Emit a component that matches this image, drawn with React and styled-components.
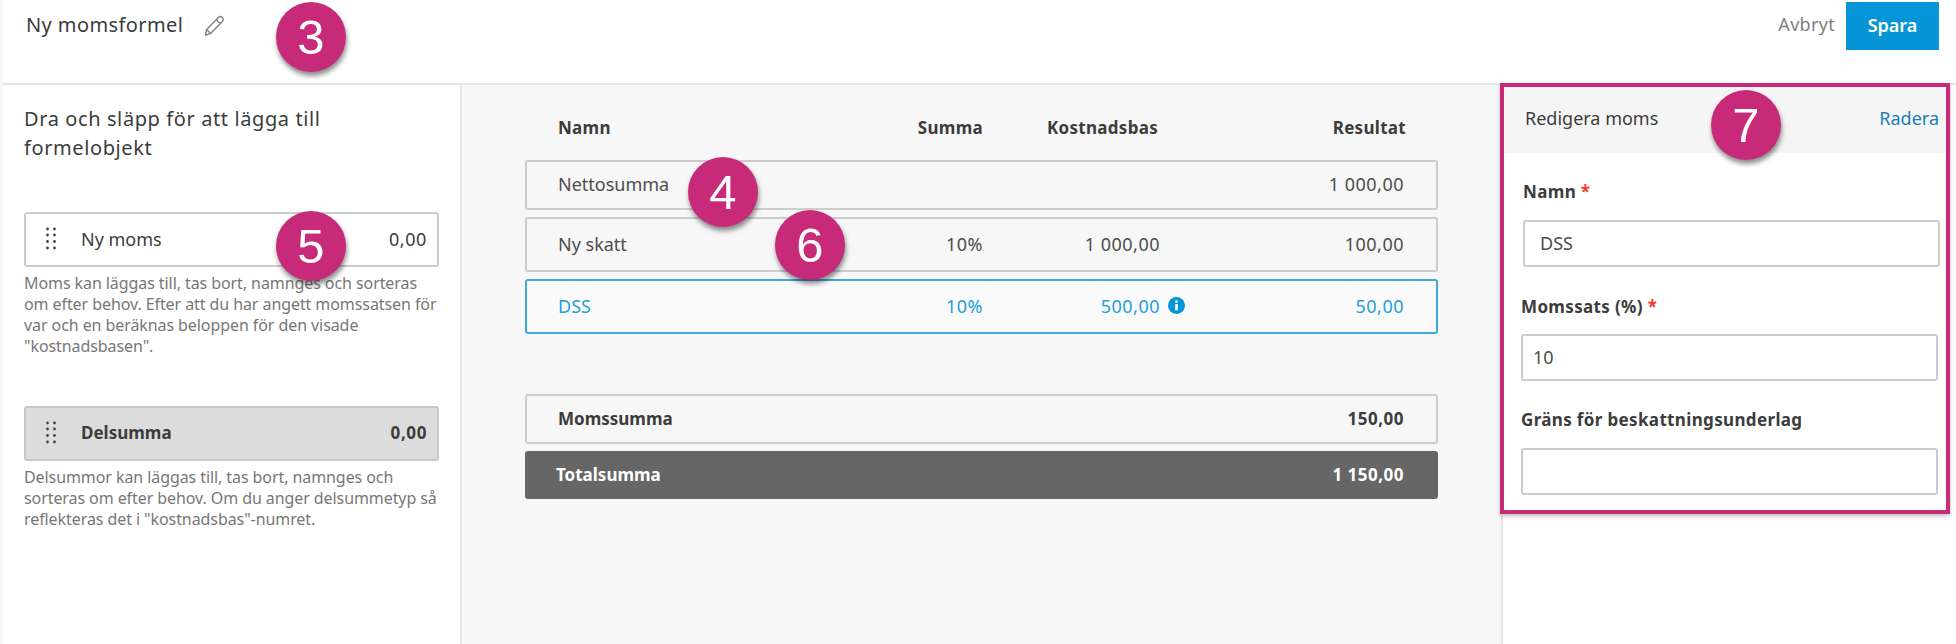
import React from "react";
import styled, { createGlobalStyle } from "styled-components";

const Global = createGlobalStyle`
  html, body { margin: 0; padding: 0; background: #fff; }
  * { box-sizing: border-box; }
  body { font-family: "Noto Sans", "Liberation Sans", sans-serif; color: #3c3c3c; }
`;

const Page = styled.div`
  position: relative;
  width: 1956px;
  height: 644px;
  overflow: hidden;
  padding-left: 3px;
  background: #f7f7f7;
  display: flex;
  flex-direction: column;
`;

const Header = styled.header`
  height: 85px;
  flex: none;
  background: #fff;
  border-bottom: 2px solid #e6e6e6;
  display: flex;
  align-items: flex-start;
  padding: 2px 17px 0 23px;
`;

const Title = styled.h1`
  margin: 6px 0 0;
  font-size: 20px;
  letter-spacing: 0.4px;
  line-height: 34px;
  font-weight: 400;
  color: #3c3c3c;
`;

const PencilIcon = styled.svg`
  width: 24px;
  height: 24px;
  margin: 12px 0 0 19px;
`;

const Actions = styled.div`
  margin-left: auto;
  display: flex;
  align-items: center;
  gap: 11px;
`;

const CancelButton = styled.span`
  font-size: 18px;
  line-height: 44px;
  padding-bottom: 4px;
  letter-spacing: 0.3px;
  color: #808080;
`;

const SaveButton = styled.button`
  width: 93px;
  height: 48px;
  border: 0;
  padding: 0 0 2px;
  background: #0696d7;
  color: #fff;
  font: 600 18px "Noto Sans", sans-serif;
`;

const Body = styled.div`
  flex: 1;
  display: grid;
  grid-template-columns: 459px 1fr 455px;
  min-height: 0;
`;

const LeftPanel = styled.aside`
  background: #fff;
  border-right: 2px solid #e6e6e6;
  padding: 19px 21px 0 21px;
`;

const PanelHeading = styled.h2`
  margin: 0 0 50px;
  font-size: 20px;
  letter-spacing: 0.6px;
  line-height: 29px;
  font-weight: 400;
  color: #3c3c3c;
`;

const DragCard = styled.div`
  height: 55px;
  border: 2px solid ${(p) => (p.$shaded ? "#c8c8c8" : "#cccccc")};
  border-radius: 3px;
  background: ${(p) => (p.$shaded ? "#dcdcdc" : "#fff")};
  display: flex;
  align-items: center;
  padding: 0 10px 2px 20px;
  font-size: ${(p) => (p.$shaded ? 17 : 18)}px;
  font-weight: ${(p) => (p.$shaded ? 700 : 400)};
`;

const Handle = styled.svg`
  width: 10px;
  height: 23px;
  margin-right: 25px;
  flex: none;
`;

const CardValue = styled.span`
  margin-left: auto;
  letter-spacing: 0.6px;
`;

const HelpText = styled.p`
  margin: 6px 0 ${(p) => p.$after || 0}px;
  font-size: 16px;
  letter-spacing: -0.08px;
  line-height: 21px;
  color: #777;
  white-space: nowrap;
`;

const Center = styled.main`
  padding: 25px 63px 0 63px;
`;

const TableHead = styled.div`
  display: grid;
  grid-template-columns: 1fr 100px 175px 248px;
  align-items: center;
  height: 34px;
  margin-bottom: 16px;
  padding: 0 32px 0 33px;
  font-size: 17px;
  letter-spacing: 0.3px;
  font-weight: 700;
  color: #3c3c3c;
`;

const Col = styled.span`
  display: flex;
  justify-content: flex-end;
  align-items: center;
  letter-spacing: 0.5px;
  grid-column: ${(p) => p.$col || "auto"};
`;

const HeadCol = styled.span`
  text-align: right;
`;

const Row = styled.div`
  display: grid;
  grid-template-columns: 1fr 100px 177px 244px;
  align-items: center;
  height: ${(p) => p.$h}px;
  padding: 0 32px 2px 31px;
  margin-bottom: 7px;
  border: 2px solid ${(p) => (p.$active ? "#3fa9de" : "#cccccc")};
  border-radius: 3px;
  font-size: 18px;
  color: ${(p) => (p.$active ? "#1f9fdc" : "#4d4d4d")};
  background: ${(p) => (p.$active ? "#fafafa" : "transparent")};
`;

const SumRow = styled(Row)`
  font-size: 17px;
  font-weight: 700;
  color: #3c3c3c;
`;

const TotalRow = styled(Row)`
  font-size: 17px;
  font-weight: 700;
  color: #fff;
  background: #666;
  border-color: #666;
  padding-left: 29px;
`;

const Spacer = styled.div`
  height: 53px;
`;

const InfoIcon = styled.svg`
  width: 17px;
  height: 17px;
  margin: 0 -25px 0 8px;
  flex: none;
`;

const RightPanel = styled.aside`
  background: #fff;
  border-left: 2px solid #e6e6e6;
`;

const EditHeader = styled.div`
  height: 68px;
  margin-right: 6px;
  background: #f5f5f5;
  display: flex;
  align-items: center;
  justify-content: space-between;
  padding: 0 11px 2px 22px;
  font-size: 18px;
`;

const DeleteLink = styled.span`
  color: #1b7fb8;
`;

const Form = styled.form`
  display: block;
`;

const Field = styled.div`
  margin-left: ${(p) => p.$left}px;
  width: 417px;
  padding-top: ${(p) => p.$top}px;
`;

const Label = styled.label`
  display: block;
  height: 27px;
  line-height: 27px;
  font-size: 17px;
  letter-spacing: 0.35px;
  font-weight: 700;
  color: #3c3c3c;
  margin-bottom: ${(p) => p.$gap}px;
`;

const Required = styled.span`
  color: #ee3b2b;
`;

const Input = styled.input`
  display: block;
  width: 100%;
  height: 47px;
  border: 2px solid #cccccc;
  border-radius: 3px;
  background: #fff;
  padding: 0 ${(p) => p.$pad}px 2px;
  font: 400 18px "Noto Sans", sans-serif;
  color: #4d4d4d;
  outline: none;
`;

const Frame = styled.div`
  position: absolute;
  left: 1500px;
  top: 83px;
  width: 450px;
  height: 431px;
  border: 4px solid #c82a7a;
  box-shadow: 0 2px 4px rgba(0, 0, 0, 0.25);
  pointer-events: none;
`;

const Callout = styled.div`
  position: absolute;
  left: ${(p) => p.$x - 35}px;
  top: ${(p) => p.$y - 35}px;
  width: 70px;
  height: 70px;
  border-radius: 50%;
  background: #c82a7a;
  color: #fff;
  box-shadow: 1px 4px 5px rgba(0, 0, 0, 0.45);
  display: flex;
  align-items: center;
  justify-content: center;
  font: 400 49px "Liberation Sans", Arial, sans-serif;
`;

const Dots = () => (
  <Handle viewBox="0 0 10 23">
    {[2, 8, 14.5, 21].flatMap((y) =>
      [1.5, 8.5].map((x) => <circle key={`${x}-${y}`} cx={x} cy={y} r="1.4" fill="#444" />)
    )}
  </Handle>
);

export default function App() {
  return (
    <Page>
      <Global />
      <Header>
        <Title>Ny momsformel</Title>
        <PencilIcon viewBox="0 0 24 24" fill="none" stroke="#808080" strokeWidth="1.4" strokeLinejoin="round">
          <path d="M3.5 21 L4.6 15.6 L16.4 3.6 A2.7 2.7 0 0 1 20.4 7.6 L8.6 19.6 Z" />
          <path d="M14.4 5.8 L18.3 9.8 M4.6 15.6 L8.6 19.6" />
        </PencilIcon>
        <Actions>
          <CancelButton>Avbryt</CancelButton>
          <SaveButton>Spara</SaveButton>
        </Actions>
      </Header>
      <Body>
        <LeftPanel>
          <PanelHeading>
            Dra och släpp för att lägga till
            <br />
            formelobjekt
          </PanelHeading>
          <DragCard>
            <Dots />
            <span>Ny moms</span>
            <CardValue>0,00</CardValue>
          </DragCard>
          <HelpText $after={49}>
            Moms kan läggas till, tas bort, namnges och sorteras
            <br />
            om efter behov. Efter att du har angett momssatsen för
            <br />
            var och en beräknas beloppen för den visade
            <br />
            "kostnadsbasen".
          </HelpText>
          <DragCard $shaded>
            <Dots />
            <span>Delsumma</span>
            <CardValue>0,00</CardValue>
          </DragCard>
          <HelpText>
            Delsummor kan läggas till, tas bort, namnges och
            <br />
            sorteras om efter behov. Om du anger delsummetyp så
            <br />
            reflekteras det i "kostnadsbas"-numret.
          </HelpText>
        </LeftPanel>
        <Center>
          <TableHead>
            <span>Namn</span>
            <HeadCol>Summa</HeadCol>
            <HeadCol>Kostnadsbas</HeadCol>
            <HeadCol>Resultat</HeadCol>
          </TableHead>
          <Row $h={50}>
            <span>Nettosumma</span>
            <Col $col="4">1 000,00</Col>
          </Row>
          <Row $h={55}>
            <span>Ny skatt</span>
            <Col>10%</Col>
            <Col>1 000,00</Col>
            <Col>100,00</Col>
          </Row>
          <Row $h={55} $active>
            <span>DSS</span>
            <Col>10%</Col>
            <Col>
              500,00
              <InfoIcon viewBox="0 0 17 17">
                <circle cx="8.5" cy="8.5" r="8.5" fill="#0696d7" />
                <circle cx="8.5" cy="4.6" r="1.4" fill="#fff" />
                <rect x="7.2" y="7" width="2.6" height="6.4" fill="#fff" />
              </InfoIcon>
            </Col>
            <Col>50,00</Col>
          </Row>
          <Spacer />
          <SumRow $h={50}>
            <span>Momssumma</span>
            <Col $col="4">150,00</Col>
          </SumRow>
          <TotalRow $h={48}>
            <span>Totalsumma</span>
            <Col $col="4">1 150,00</Col>
          </TotalRow>
        </Center>
        <RightPanel>
          <EditHeader>
            <span>Redigera moms</span>
            <DeleteLink>Radera</DeleteLink>
          </EditHeader>
          <Form>
            <Field $left={20} $top={25}>
              <Label $gap={15}>
                Namn<Required> *</Required>
              </Label>
              <Input $pad={15} readOnly value="DSS" />
            </Field>
            <Field $left={18} $top={26}>
              <Label $gap={14}>
                Momssats (%)<Required> *</Required>
              </Label>
              <Input $pad={10} readOnly value="10" />
            </Field>
            <Field $left={18} $top={25}>
              <Label $gap={15}>Gräns för beskattningsunderlag</Label>
              <Input $pad={10} readOnly value="" />
            </Field>
          </Form>
        </RightPanel>
      </Body>
      <Frame />
      <Callout $x={311} $y={37}>3</Callout>
      <Callout $x={311} $y={246}>5</Callout>
      <Callout $x={723} $y={192}>4</Callout>
      <Callout $x={810} $y={245}>6</Callout>
      <Callout $x={1746} $y={125}>7</Callout>
    </Page>
  );
}
